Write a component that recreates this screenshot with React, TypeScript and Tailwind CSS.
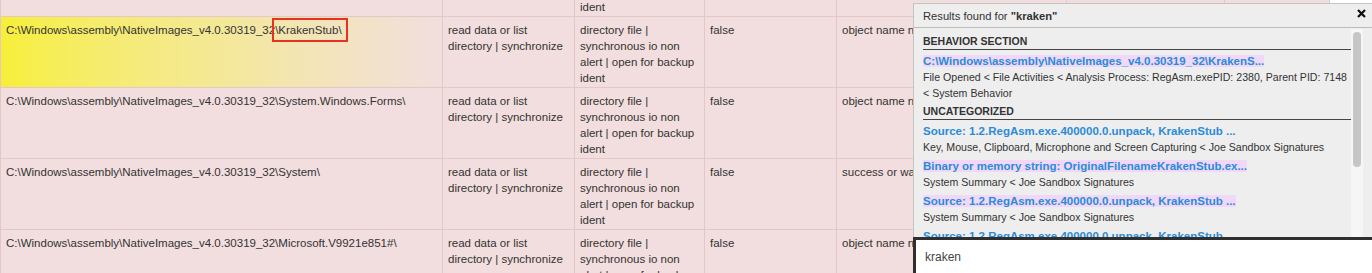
import React from "react";

const BASE = "C:\\Windows\\assembly\\NativeImages_v4.0.30319_32\\";

type Row = { tail: string; highlight?: boolean; status: string };

const rows: Row[] = [
  { tail: "mscorlib\\", status: "object name not found" },
  { tail: "KrakenStub\\", highlight: true, status: "object name not found" },
  { tail: "System.Windows.Forms\\", status: "object name not found" },
  { tail: "System\\", status: "success or wait" },
  { tail: "Microsoft.V9921e851#\\", status: "object name not found" },
];

const cell =
  "h-[71px] overflow-hidden whitespace-nowrap border-b border-r border-[#e4c8c8] bg-[#f2dede] px-[5px] pt-[5px] text-[11.5px] leading-[16px] text-[#333]";

function TableRow({ row }: { row: Row }) {
  return (
    <div className="grid grid-cols-[443px_132px_130px_132px_230px_158px_105px]">
      <div
        className={
          cell +
          " border-l " +
          (row.highlight ? "bg-linear-to-r from-[#f7ef36] via-[#f4e898] to-[#f2dede]" : "")
        }
      >
        {row.highlight ? (
          <>
            {BASE.slice(0, -1)}
            <span className="relative">
              {"\\KrakenStub\\"}
              <span className="absolute -top-[6px] -bottom-[6px] -left-[3px] -right-[6px] border-2 border-[#e8321f]" />
            </span>
          </>
        ) : (
          BASE + row.tail
        )}
      </div>
      <div className={cell}>
        read data or list
        <br />
        directory | synchronize
      </div>
      <div className={cell}>
        directory file |
        <br />
        synchronous io non
        <br />
        alert | open for backup
        <br />
        ident
      </div>
      <div className={cell}>false</div>
      <div className={cell}>{row.status}</div>
      <div className={cell}>1</div>
      <div className={cell}>6F3E1A2C</div>
    </div>
  );
}

function SectionHeader({ title, first }: { title: string; first?: boolean }) {
  return (
    <div
      className={
        "h-[17px] border-b border-[#444] text-[10.5px] font-bold leading-[16px] text-[#333] " +
        (first ? "" : "mt-[2px]")
      }
    >
      {title}
    </div>
  );
}

function Result({
  link,
  lines,
  hl,
}: {
  link: string;
  lines: string[];
  hl?: boolean;
}) {
  return (
    <div className="mt-[3px] whitespace-nowrap">
      <div className="text-[11.5px] font-bold leading-[16px] text-[#2a8bd8]">
        <span className={hl ? "bg-[#f1d8f8]" : ""}>{link}</span>
      </div>
      {lines.map((l, i) => (
        <div key={i} className="text-[10.6px] leading-[16px] text-[#333]">
          {l}
        </div>
      ))}
    </div>
  );
}

export default function App() {
  return (
    <div className="relative h-[273px] w-[1372px] overflow-hidden bg-white font-['Liberation_Sans',Arial,sans-serif]">
      <div className="mt-[-54px] w-[1330px]">
        {rows.map((r, i) => (
          <TableRow key={i} row={r} />
        ))}
      </div>

      {/* Search results popup */}
      <div className="absolute left-[913px] top-[3px] h-[300px] w-[470px] border border-[#c4c4c4] bg-[#eeeeee] text-[#333]">
        <div className="flex h-[24px] items-center justify-between border-b border-[#bcbcbc] pl-[9px] pr-[16px] text-[11.2px] leading-[16px]">
          <span>
            Results found for <b>"kraken"</b>
          </span>
          <svg width="9" height="9" viewBox="0 0 9 9" className="mb-[5px]">
            <path d="M1 1L8 8M8 1L1 8" stroke="#111" strokeWidth="2.2" />
          </svg>
        </div>
        <div className="flex">
          <div className="w-[437px] pl-[9px] pt-[5px]">
            <SectionHeader title="BEHAVIOR SECTION" first />
            <Result
              hl
              link="C:\Windows\assembly\NativeImages_v4.0.30319_32\KrakenS..."
              lines={[
                "File Opened < File Activities < Analysis Process: RegAsm.exePID: 2380, Parent PID: 7148",
                "< System Behavior",
              ]}
            />
            <SectionHeader title="UNCATEGORIZED" />
            <Result
              link="Source: 1.2.RegAsm.exe.400000.0.unpack, KrakenStub ..."
              lines={["Key, Mouse, Clipboard, Microphone and Screen Capturing < Joe Sandbox Signatures"]}
            />
            <Result
              hl
              link="Binary or memory string: OriginalFilenameKrakenStub.ex..."
              lines={["System Summary < Joe Sandbox Signatures"]}
            />
            <Result
              hl
              link="Source: 1.2.RegAsm.exe.400000.0.unpack, KrakenStub ..."
              lines={["System Summary < Joe Sandbox Signatures"]}
            />
            <Result
              link="Source: 1.2.RegAsm.exe.400000.0.unpack, KrakenStub ..."
              lines={["System Summary < Joe Sandbox Signatures"]}
            />
          </div>
          <div className="mt-[1px] h-[240px] w-[12px] bg-[#f6f6f6] px-[2px] pt-[3px]">
            <div className="h-[135px] w-[8px] rounded-full bg-[#c6c6c6]" />
          </div>
        </div>
      </div>

      {/* Search input */}
      <div className="absolute left-[913px] top-[237px] h-[60px] w-[470px] border-l-[3px] border-t-[3px] border-[#2f2f2f] bg-white pl-[9px] pt-[8px] text-[12px] leading-[18px] text-[#444]">
        kraken
      </div>
    </div>
  );
}
